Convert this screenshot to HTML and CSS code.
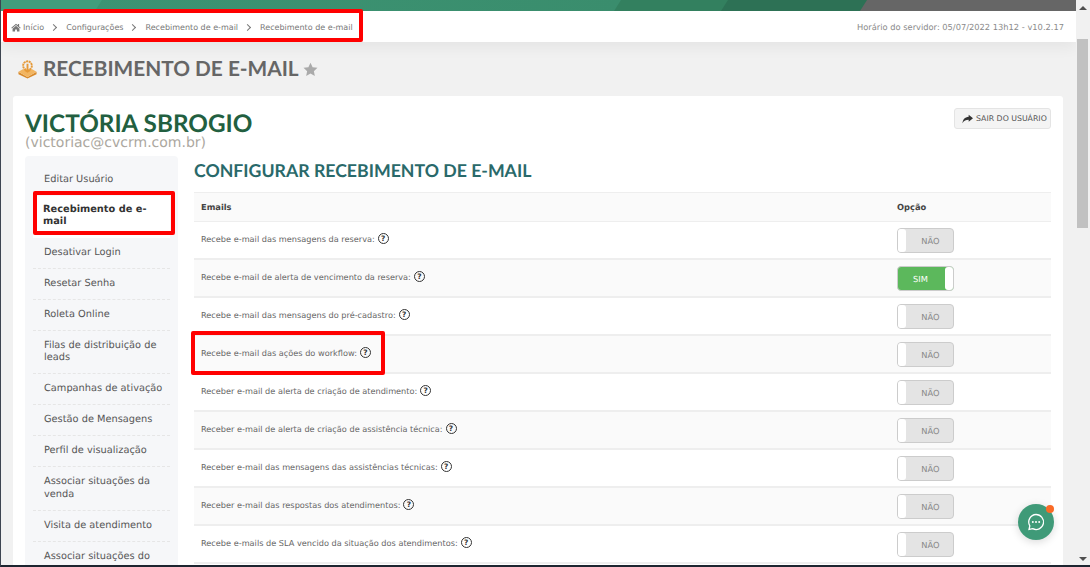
FILE: index.html
```html
<!DOCTYPE html>
<html lang="pt-BR">
<head>
<meta charset="utf-8">
<title>Recebimento de e-mail</title>
<link rel="stylesheet" href="styles.css">
</head>
<body>
<div class="frame">
  <div class="page">
    <div class="band"><i class="seg s4"></i><i class="seg s3"></i><i class="seg s2"></i><i class="seg s1"></i></div>
    <header class="crumbbar">
      <nav class="crumbs">
        <svg class="home" viewBox="0 0 16 14"><path d="M8 1 0.5 7.500l1 1L8 3l6.500 5.500 1-1L13 5.300V1.500h-2v2L8 1zM8 4.200 2.500 8.800V13.500h4V10h3v3.500h4V8.800z"/></svg>
        <span>Início</span><b class="sep"></b><span>Configurações</span><b class="sep"></b><span>Recebimento de e-mail</span><b class="sep"></b><span>Recebimento de e-mail</span>
      </nav>
      <div class="server">Horário do servidor: 05/07/2022 13h12 - v10.2.17</div>
    </header>
    <div class="title-row">
      <svg class="logo" viewBox="0 0 20 20"><path fill="#d98a2b" d="M0.500 13l9.500 5.500 9.500-5.500v2.500L10 20 .5 15.500z"/><path fill="#f2b561" d="M0.500 13l5-3 4.500 3 4.500-3 5 3L10 18.500z"/><circle cx="10" cy="6.500" r="4.600" fill="none" stroke="#e69a38" stroke-width="2" stroke-dasharray="2.200 .6"/><path fill="#e69a38" d="M9 4.500h2v6.500l2-1v2l-3 2-3-2v-2l2 1z"/></svg>
      <h1>RECEBIMENTO DE E-MAIL</h1>
      <svg class="star" viewBox="0 0 20 20"><path d="M10 1l2.800 6 6.500.8-4.800 4.400 1.300 6.400L10 15.400l-5.800 3.200 1.300-6.400L.7 7.800 7.200 7z"/></svg>
    </div>
    <main class="card">
      <div class="user-head">
        <div>
          <div class="name">VICTÓRIA SBROGIO</div>
          <div class="email">(victoriac@cvcrm.com.br)</div>
        </div>
        <button class="exit"><svg viewBox="0 0 14 12"><path d="M8.500 0.500 14 5 8.500 9.500V7C5 7 2.500 8 0.500 11.500 0.800 7 3.500 3.300 8.500 3z"/></svg>SAIR DO USUÁRIO</button>
      </div>
      <div class="columns">
        <aside class="side">
          <a>Editar Usuário</a>
          <a class="active">Recebimento de e-mail</a>
          <a>Desativar Login</a>
          <a>Resetar Senha</a>
          <a>Roleta Online</a>
          <a>Filas de distribuição de leads</a>
          <a>Campanhas de ativação</a>
          <a>Gestão de Mensagens</a>
          <a>Perfil de visualização</a>
          <a>Associar situações da venda</a>
          <a>Visita de atendimento</a>
          <a>Associar situações do</a>
        </aside>
        <section class="content">
          <h2>CONFIGURAR RECEBIMENTO DE E-MAIL</h2>
          <div class="table">
            <div class="row head"><span>Emails</span><span class="opt">Opção</span></div>
            <div class="row"><span class="lbl">Recebe e-mail das mensagens da reserva:<i class="q">?</i></span><span class="opt"><span class="tg">NÃO</span></span></div>
            <div class="row"><span class="lbl">Recebe e-mail de alerta de vencimento da reserva:<i class="q">?</i></span><span class="opt"><span class="tg on">SIM</span></span></div>
            <div class="row"><span class="lbl">Recebe e-mail das mensagens do pré-cadastro:<i class="q">?</i></span><span class="opt"><span class="tg">NÃO</span></span></div>
            <div class="row"><span class="lbl">Recebe e-mail das ações do workflow:<i class="q">?</i></span><span class="opt"><span class="tg">NÃO</span></span></div>
            <div class="row"><span class="lbl">Receber e-mail de alerta de criação de atendimento:<i class="q">?</i></span><span class="opt"><span class="tg">NÃO</span></span></div>
            <div class="row"><span class="lbl">Receber e-mail de alerta de criação de assistência técnica:<i class="q">?</i></span><span class="opt"><span class="tg">NÃO</span></span></div>
            <div class="row"><span class="lbl">Receber e-mail das mensagens das assistências técnicas:<i class="q">?</i></span><span class="opt"><span class="tg">NÃO</span></span></div>
            <div class="row"><span class="lbl">Receber e-mail das respostas dos atendimentos:<i class="q">?</i></span><span class="opt"><span class="tg">NÃO</span></span></div>
            <div class="row"><span class="lbl">Recebe e-mails de SLA vencido da situação dos atendimentos:<i class="q">?</i></span><span class="opt"><span class="tg">NÃO</span></span></div>
          </div>
        </section>
      </div>
    </main>
  </div>
  <div class="scrollbar"><i class="up"></i><i class="thumb"></i><i class="down"></i></div>
</div>
<div class="mark m1"></div>
<div class="mark m2"></div>
<div class="mark m3"></div>
<div class="chat"><svg viewBox="0 0 20 20"><path fill="none" stroke="#fff" stroke-width="1.300" d="M10 2.500a7.500 7.500 0 1 1-3.300 14.200L3 17.500l.8-3.700A7.500 7.500 0 0 1 10 2.500z"/><circle cx="6.800" cy="10" r="1" fill="#fff"/><circle cx="10" cy="10" r="1" fill="#fff"/><circle cx="13.200" cy="10" r="1" fill="#fff"/></svg><i class="dot"></i></div>
</body>
</html>
```
FILE: styles.css
```css
* { box-sizing: border-box; }
html, body { margin: 0; height: 100%; overflow: hidden; }
body { font-family: "DejaVu Sans", Verdana, sans-serif; color: #555; background: #f1f1f1; text-rendering: geometricPrecision; }
.frame { display: flex; width: 1090px; height: 567px; overflow: hidden; border-left: 1px solid #3d4450; border-bottom: 2px solid #1d2530; }
.page { flex: 1; min-width: 0; background: #f1f1f1; overflow: hidden; }

.band { height: 11px; background: #666; position: relative; overflow: hidden; }
.seg { position: absolute; top: 0; bottom: 0; left: 0; display: block; clip-path: polygon(0 0,100% 0,calc(100% - 7px) 100%,0 100%); }
.s1 { width: 101px; background: #419e7c; }
.s2 { width: 620px; background: linear-gradient(90deg, #3c9574, #3a8d6d); }
.s3 { width: 727px; background: #33805f; }
.s4 { width: 866px; background: #2d7155; }

.crumbbar { height: 31px; background: #fff; display: flex; align-items: center; justify-content: space-between; padding: 1px 12px 0 10px; box-shadow: 0 6px 14px rgba(0,0,0,.05); }
.crumbs { display: flex; align-items: center; font-size: 8px; color: #777; padding-top: 1px; }
.home { width: 10px; height: 9px; fill: #777; margin-right: 2px; }
.sep { display: inline-block; width: 5px; height: 5px; border-top: 1px solid #777; border-right: 1px solid #777; transform: rotate(45deg); margin: 0 10px 0 7px; }
.server { font-size: 8.300px; color: #8a8a8a; }

.title-row { height: 54px; display: flex; align-items: center; padding: 0 0 0 17px; }
.logo { width: 19px; height: 20px; margin-right: 6px; }
h1 { margin: 0; font: 700 20.800px/1 Lato, sans-serif; color: #666; }
.star { width: 15px; height: 15px; fill: #aaa; margin-left: 4px; }

.card { margin: 0 13px 0 12px; height: 480px; background: #fff; border-radius: 3px; padding: 12px 12px 0; }
.user-head { display: flex; justify-content: space-between; align-items: flex-start; height: 48px; }
.name { font: 700 24.300px/26px Lato, sans-serif; color: #225f40; margin-top: 3px; }
.email { font-size: 14px; line-height: 12px; color: #aca89f; }
.exit { display: flex; align-items: center; gap: 3px; height: 21px; width: 97px; padding: 0 0 0 7px; background: #f4f4f4; border: 1px solid #e4e4e4; border-radius: 3px; font: 7.800px "DejaVu Sans", sans-serif; color: #555; }
.exit svg { width: 11px; height: 10px; fill: #333; }

.columns { display: flex; gap: 16px; }
.side { width: 153px; flex: none; background: #f6f7f9; border-radius: 4px; padding: 11px 8px 0; height: 420px; }
.side a { display: block; padding: 9px 4px 8.500px 11px; font-size: 9.800px; line-height: 12.500px; color: #555; border-bottom: 1px dashed #e6e6e6; }
.side a:first-child, .side a.active { border-bottom: 0; }
.side a:first-child { padding: 7px 11px 9px; }
.side a.active { background: #fff; font-weight: 700; color: #333; padding: 8px 10px 9px; }

.content { flex: 1; min-width: 0; }
h2 { margin: 0; height: 36px; font: 700 17.700px/30px Lato, sans-serif; color: #29696a; }
.row { display: flex; align-items: center; height: 38px; border-bottom: 2px solid #eee; padding-left: 7px; font-size: 8.180px; color: #666; }
.row:nth-child(odd) { background: #fafafa; }
.row.head { height: 30px; border-top: 1px solid #eee; border-bottom-width: 1px; background: #fafafa; font-weight: 700; color: #444; font-size: 8.300px; }
.row > :first-child { flex: 1; }
.opt { width: 154px; flex: none; }
.lbl { display: flex; align-items: center; padding-bottom: 3px; }
.q { display: inline-flex; align-items: center; justify-content: center; width: 11px; height: 11px; margin-left: 3px; border: 1.200px solid #333; border-radius: 50%; font: 700 7.500px/1 "DejaVu Sans", sans-serif; color: #333; }
.tg { display: block; position: relative; width: 57px; height: 25px; border: 1px solid #ccc; border-radius: 4px; background: #e4e4e4; text-align: center; padding-left: 10px; font: 8.300px/25px "DejaVu Sans", sans-serif; color: #888; }
.tg::before { content: ""; position: absolute; left: 0; top: 0; bottom: 0; width: 8px; background: #fff; border-radius: 3px; }
.tg.on { background: #5cb85c; color: #fff; padding: 0 10px 0 0; }
.tg.on::before { left: auto; right: 0; }

.scrollbar { width: 14px; flex: none; background: #f1f1f1; position: relative; }
.thumb { position: absolute; left: 1px; width: 11px; top: 39px; height: 189px; background: #c1c1c1; }
.up, .down { position: absolute; left: 3px; width: 0; height: 0; border-left: 4px solid transparent; border-right: 4px solid transparent; }
.up { top: 6px; border-bottom: 4px solid #505050; }
.down { bottom: 4px; border-top: 4px solid #505050; }

.mark { position: fixed; border: 4px solid #f00; border-radius: 2px; }
.m1 { left: 3px; top: 9px; width: 360px; height: 33px; }
.m2 { left: 33px; top: 191px; width: 142px; height: 44px; }
.m3 { left: 191px; top: 331px; width: 194px; height: 44px; }

.chat { position: fixed; left: 1018px; top: 504px; width: 36px; height: 36px; border-radius: 50%; background: #3f9a78; display: flex; align-items: center; justify-content: center; box-shadow: 0 2px 8px rgba(0,0,0,.15); }
.chat svg { width: 20px; height: 20px; }
.dot { position: absolute; right: 0; top: 1px; width: 8px; height: 8px; border-radius: 50%; background: #f96a26; }
```
